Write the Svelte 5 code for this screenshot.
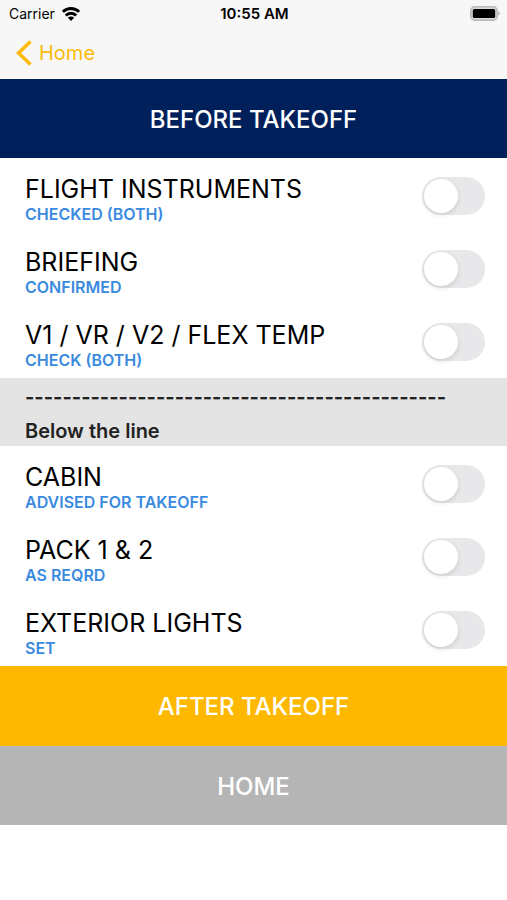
<script lang="ts">
	interface Item {
		id: string;
		title: string;
		response: string;
		done: boolean;
	}

	let aboveLine: Item[] = $state([
		{ id: 'instruments', title: 'FLIGHT INSTRUMENTS', response: 'CHECKED (BOTH)', done: false },
		{ id: 'briefing', title: 'BRIEFING', response: 'CONFIRMED', done: false },
		{ id: 'speeds', title: 'V1 / VR / V2 / FLEX TEMP', response: 'CHECK (BOTH)', done: false }
	]);

	let belowLine: Item[] = $state([
		{ id: 'cabin', title: 'CABIN', response: 'ADVISED FOR TAKEOFF', done: false },
		{ id: 'packs', title: 'PACK 1 & 2', response: 'AS REQRD', done: false },
		{ id: 'lights', title: 'EXTERIOR LIGHTS', response: 'SET', done: false }
	]);

	const dashes = '-'.repeat(45);
</script>

{#snippet checklist(items: Item[])}
	<ul class="checklist">
		{#each items as item (item.id)}
			<li>
				<label class="row" for={item.id}>
					<span class="labels">
						<span class="title">{item.title}</span>
						<span class="response">{item.response}</span>
					</span>
					<input class="switch" type="checkbox" id={item.id} bind:checked={item.done} />
				</label>
			</li>
		{/each}
	</ul>
{/snippet}

<div class="screen">
	<header>
		<div class="status">
			<div class="carrier">
				<span>Carrier</span>
				<svg width="18" height="14" viewBox="0 0 18 14" aria-hidden="true">
					<g fill="none" stroke="#000" stroke-width="2.9">
						<path d="M0.9 4.8a11.5 11.5 0 0 1 16.2 0" />
						<path d="M3.8 8.4a7.3 7.3 0 0 1 10.4 0" />
					</g>
					<path d="M9 13.9l-3.1-3.1a4.4 4.4 0 0 1 6.2 0z" />
				</svg>
			</div>
			<span class="time">10:55 AM</span>
			<svg class="battery" width="30" height="15" viewBox="0 0 30 15" aria-hidden="true">
				<rect x="0.8" y="0.8" width="26.4" height="13.4" rx="4" fill="#d8d8d8" stroke="#b9b9b9" stroke-width="1.6" />
				<rect x="2.8" y="2.9" width="22.4" height="9.2" rx="1.5" />
				<path d="M28.3 5.2q1.7 0.7 1.7 2.3t-1.7 2.3z" fill="#b3b3b3" />
			</svg>
		</div>
		<nav>
			<a class="back" href="#home">
				<svg width="17" height="27" viewBox="0 0 17 27" aria-hidden="true">
					<path d="M14.5 1.5L2.5 13l12 11.5" fill="none" stroke="#fcbb0a" stroke-width="3.6" />
				</svg>
				<span>Home</span>
			</a>
		</nav>
	</header>

	<main>
		<h1 class="bar">BEFORE TAKEOFF</h1>
		{@render checklist(aboveLine)}
		<div class="divider">
			<span class="dashes">{dashes}</span>
			<span>Below the line</span>
		</div>
		{@render checklist(belowLine)}
		<button class="bar next" type="button">AFTER TAKEOFF</button>
		<button class="bar home" type="button">HOME</button>
	</main>
</div>

<style>
	:global(body) {
		margin: 0;
		background: #fff;
	}

	.screen {
		font-family: Inter, 'Liberation Sans', sans-serif;
		color: #000;
	}

	header {
		background: #f7f7f7;
	}

	.status {
		display: grid;
		grid-template-columns: 1fr auto 1fr;
		align-items: center;
		height: 27px;
		padding: 0 7px 0 9px;
		font-size: 14px;
	}

	.carrier {
		display: flex;
		align-items: center;
		gap: 7px;
	}

	.time {
		font-size: 15px;
		font-weight: 600;
	}

	.battery {
		justify-self: end;
	}

	nav {
		display: flex;
		align-items: center;
		height: 52px;
		padding: 0 16px;
	}

	.back {
		display: flex;
		align-items: center;
		gap: 6px;
		color: #fcbb0a;
		font-size: 20px;
		text-decoration: none;
	}

	.bar {
		display: block;
		box-sizing: border-box;
		width: 100%;
		margin: 0;
		padding: 25px 16px 23px;
		border: 0;
		background: #00205c;
		color: #fff;
		font-family: inherit;
		font-size: 24px;
		font-weight: 500;
		line-height: 31px;
		text-align: center;
	}

	.bar.next {
		padding-bottom: 24px;
		background: #ffb800;
	}

	.bar.home {
		background: #b5b5b5;
	}

	.checklist {
		margin: 0;
		padding: 0 0 1px;
		list-style: none;
	}

	.row {
		display: flex;
		align-items: center;
		justify-content: space-between;
		padding: 11px 22px 8px 25px;
	}

	.labels {
		display: flex;
		flex-direction: column;
		padding-top: 4px;
	}

	.title {
		font-size: 25px;
		line-height: 32px;
	}

	.response {
		color: #3a8ae0;
		font-size: 16px;
		font-weight: 600;
		line-height: 18px;
	}

	.switch {
		appearance: none;
		flex: none;
		width: 63px;
		height: 38px;
		margin: 0;
		padding: 2px;
		border-radius: 19px;
		background: #e8e8ea;
		cursor: pointer;
		transition: background 0.2s;
	}

	.switch::before {
		content: '';
		display: block;
		width: 34px;
		height: 34px;
		border-radius: 50%;
		background: #fff;
		box-shadow: 0 2px 5px rgba(0, 0, 0, 0.12);
		transition: transform 0.2s;
	}

	.switch:checked {
		background: #34c759;
	}

	.switch:checked::before {
		transform: translateX(25px);
	}

	.divider {
		display: flex;
		flex-direction: column;
		gap: 10px;
		padding: 7px 25px 3px;
		overflow: hidden;
		background: #e4e4e4;
		color: #222;
		font-size: 20px;
		font-weight: 600;
		line-height: 24px;
	}

	.dashes {
		font-weight: 700;
		white-space: nowrap;
	}
</style>
